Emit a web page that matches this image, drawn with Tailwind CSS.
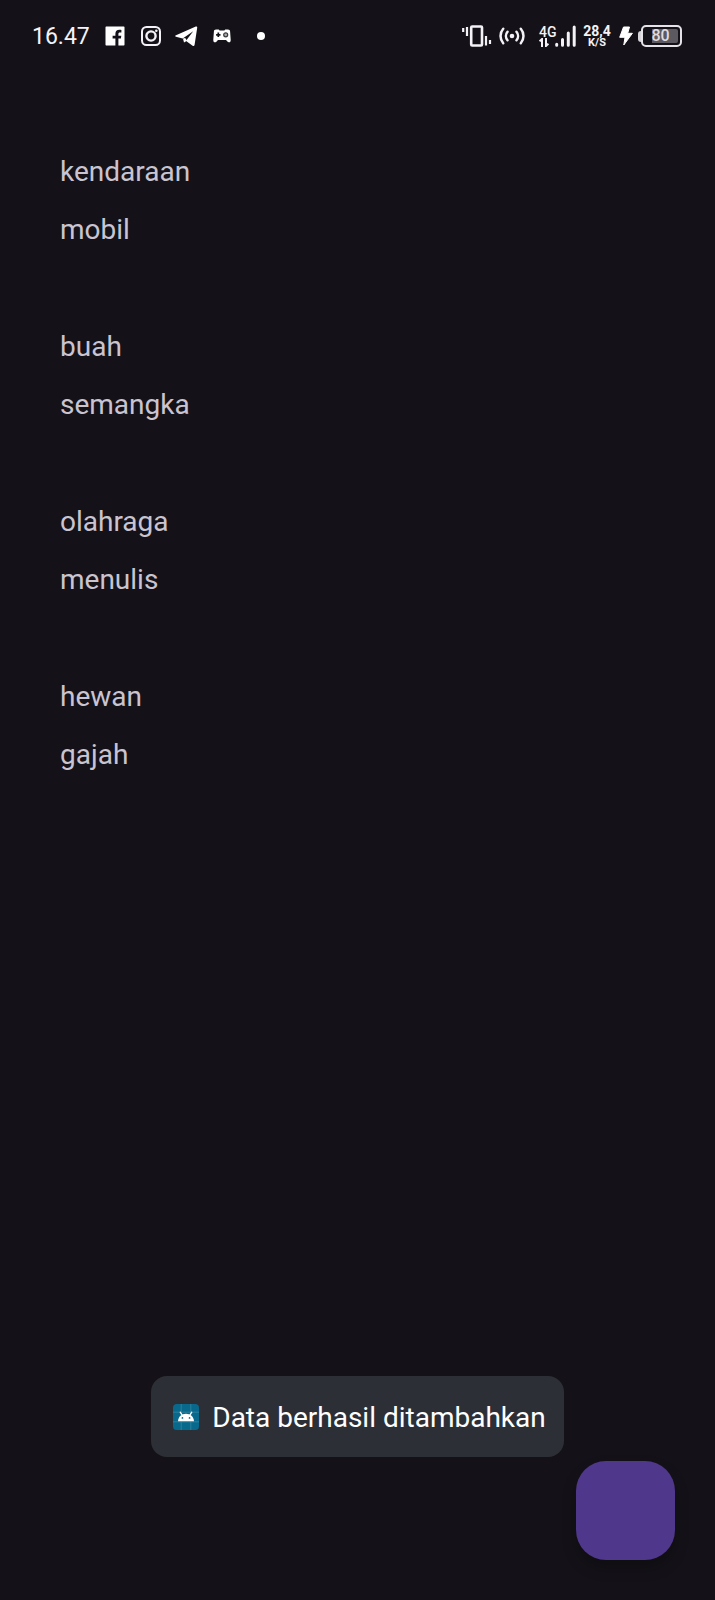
<!DOCTYPE html>
<html lang="id">
<head>
<meta charset="utf-8">
<meta name="viewport" content="width=device-width, initial-scale=1">
<title>Daftar data</title>
<script src="https://cdn.jsdelivr.net/npm/@tailwindcss/browser@4"></script>
</head>
<body class="min-h-screen flex flex-col bg-[#141218] text-[#cac4d0] font-['Roboto',sans-serif]">

<header class="flex items-center justify-between h-[72px] pl-8 pr-[33px] text-[#f4f2f6]">
  <div class="flex items-center">
    <time class="text-[23px] leading-7 w-[58px] pt-[2px]">16.47</time>
    <svg class="w-5 h-5 ml-[15px]" viewBox="0 0 20 20" aria-label="Facebook"><path fill="#fff" fill-rule="evenodd" d="M1.200.5h17.600a.7.7 0 0 1 .7.7v17.600a.7.7 0 0 1-.7.7h-5.400V12.400h2.500l.4-2.700h-2.900V8c0-1 .4-1.500 1.500-1.500h1.500V4c-.5-.1-1.200-.2-2.100-.2-2.400 0-3.900 1.400-3.900 3.900v2H7.600v2.700h2.800v7.100H1.200a.7.7 0 0 1-.7-.7V1.200a.7.7 0 0 1 .7-.7z"/></svg>
    <svg class="w-5 h-5 ml-4" viewBox="0 0 20 20" fill="none" stroke="currentColor" stroke-width="2" aria-label="Instagram"><rect x="1" y="1" width="18" height="18" rx="4.500"/><circle cx="10" cy="10" r="4.600" stroke-width="2.400"/><circle cx="15.300" cy="4.700" r="1.300" fill="currentColor" stroke="none"/></svg>
    <svg class="w-6 h-5 ml-[13px]" viewBox="0 0 24 20" fill="#fff" aria-label="Telegram"><path d="M2 9.200 21.800.6c1-.4 1.600.1 1.400 1.200l-2.600 17c-.2 1.200-1.100 1.500-2 .9l-5.800-4.200-.8-.8 7.200-9.500-10.500 7.400-6.700-1.900c-1-.3-1-1.100 0-1.500z"/><path d="m9 12.500 1 4 3-1.800-1.800-2.700z"/></svg>
    <svg class="w-[18px] h-[14px] ml-[15px]" viewBox="0 0 18 14" aria-label="Game"><path fill="#fff" d="M3 .6h2.800l.8.8h4.800l.8-.8H15c1.200 0 2 .8 2.100 1.800l.6 8.300c.1 1.600-.5 2.600-1.800 2.600-.8 0-1.200-.4-1.700-1l-1.200-1.200H5l-1.200 1.200c-.5.6-.9 1-1.700 1-1.300 0-1.900-1-1.800-2.600l.6-8.300C1 1.400 1.800.6 3 .6z"/><path stroke="#141218" stroke-width="1.700" d="M5.300 3.600v4.400M3.100 5.800h4.400"/><circle cx="12.700" cy="5.800" r="2" fill="#aaa" stroke="#3a383e" stroke-width="1.200"/></svg>
    <svg class="w-2 h-2 ml-[26px]" viewBox="0 0 8 8" fill="#fff" aria-hidden="true"><circle cx="4" cy="4" r="4"/></svg>
  </div>

  <div class="flex items-center">
    <svg class="w-[30px] h-[22px]" viewBox="0 0 30 22" fill="none" stroke="currentColor" aria-label="Getar"><rect x="9.200" y="1.500" width="10.800" height="19" rx="1" stroke-width="2.600"/><path stroke-width="2.200" d="M1.200 3v4M5 2v9M24 11v9.500M28 15v4"/></svg>
    <svg class="w-[26px] h-[20px] ml-[7px]" viewBox="0 0 26 20" fill="none" stroke="currentColor" stroke-width="2.500" stroke-linecap="round" aria-label="Hotspot"><circle cx="13" cy="10" r="2.300" fill="currentColor" stroke="none"/><path d="M8.500 5.800a6.500 6.500 0 0 0 0 8.400M17.500 5.800a6.500 6.500 0 0 1 0 8.400M4.200 2.800a11 11 0 0 0 0 14.400M21.800 2.800a11 11 0 0 1 0 14.400"/></svg>
    <div class="flex items-end ml-[14px]">
      <div class="flex flex-col w-4">
        <span class="text-[14px] leading-3 font-medium">4G</span>
        <svg class="w-[10px] h-[9px]" viewBox="0 0 10 9" fill="none" stroke="currentColor" stroke-width="2" aria-hidden="true"><path d="M.6 3.300 3 1v8M9.400 5.700 7 8V0"/></svg>
      </div>
      <svg class="w-[21px] h-[22px]" viewBox="0 0 21 22" fill="none" stroke="currentColor" stroke-width="3" stroke-linecap="round" aria-label="Sinyal"><path d="M1.700 19.200v1M7.500 14.500v5.700M13.300 8v12.200M19.200 2v18.200"/></svg>
    </div>
    <div class="flex flex-col items-center w-7 ml-[7px] pt-px font-bold">
      <span class="text-[14px] leading-3">28,4</span>
      <span class="text-[11px] leading-[11px]">K/S</span>
    </div>
    <svg class="w-[14px] h-[20px] ml-2" viewBox="0 0 14 20" fill="#fff" stroke="#fff" stroke-linejoin="round" aria-label="Mengisi daya"><path d="M4.500 1h6L8.700 7.300h4.700L4.800 19l1.200-7.700H.7z"/></svg>
    <div class="flex items-center ml-[5px]" aria-label="Baterai">
      <div class="w-[3px] h-[11px] rounded-l-sm bg-[#d8d5da]"></div>
      <div class="w-[41px] h-[22px] p-[2px] rounded-[5px] border-2 border-[#e6e3e8]">
        <div class="flex items-center justify-center h-full pr-[2px] rounded-[2px] bg-[linear-gradient(to_right,#141218_20%,#5c5a60_20%)] text-[16px] font-medium text-[#dedbe0]">80</div>
      </div>
    </div>
  </div>
</header>

<main class="flex-1 px-[60px] pt-[84px] text-[28px] leading-8">
  <dl class="flex flex-col gap-[85px]">
    <div class="flex flex-col gap-[26px]"><dt>kendaraan</dt><dd>mobil</dd></div>
    <div class="flex flex-col gap-[26px]"><dt>buah</dt><dd>semangka</dd></div>
    <div class="flex flex-col gap-[26px]"><dt>olahraga</dt><dd>menulis</dd></div>
    <div class="flex flex-col gap-[26px]"><dt>hewan</dt><dd>gajah</dd></div>
  </dl>
</main>

<footer class="flex flex-col gap-1 pb-10 px-10">
  <div role="status" class="flex items-center self-center gap-[13px] h-[81px] pl-[22px] pr-[18px] rounded-2xl bg-[#2d2f36] text-white text-[28px] leading-8">
    <svg class="w-[26px] h-[26px]" viewBox="0 0 27 27" aria-hidden="true"><rect width="27" height="27" rx="4" fill="#09698c"/><path stroke="#2f819e" stroke-width="1" d="M8.500 0v27M18.500 0v27M0 8.500h27M0 18.500h27"/><path stroke="#fff" stroke-width="1.300" stroke-linecap="round" d="m7.500 8.500 2 3M19.500 8.500l-2 3"/><path fill="#fff" d="M5.200 17.800C5.500 13 9 10 13.500 10s8 3 8.300 7.800z"/><circle cx="9.800" cy="14.500" r=".9" fill="#09698c"/><circle cx="17.200" cy="14.500" r=".9" fill="#09698c"/></svg>
    <span class="pt-[2px]">Data berhasil ditambahkan</span>
  </div>
  <button type="button" aria-label="Tambah data" class="self-end size-[99px] rounded-[30px] bg-[#4f378b] shadow-[0_8px_14px_rgba(0,0,0,0.25)]"></button>
</footer>
</body>
</html>
